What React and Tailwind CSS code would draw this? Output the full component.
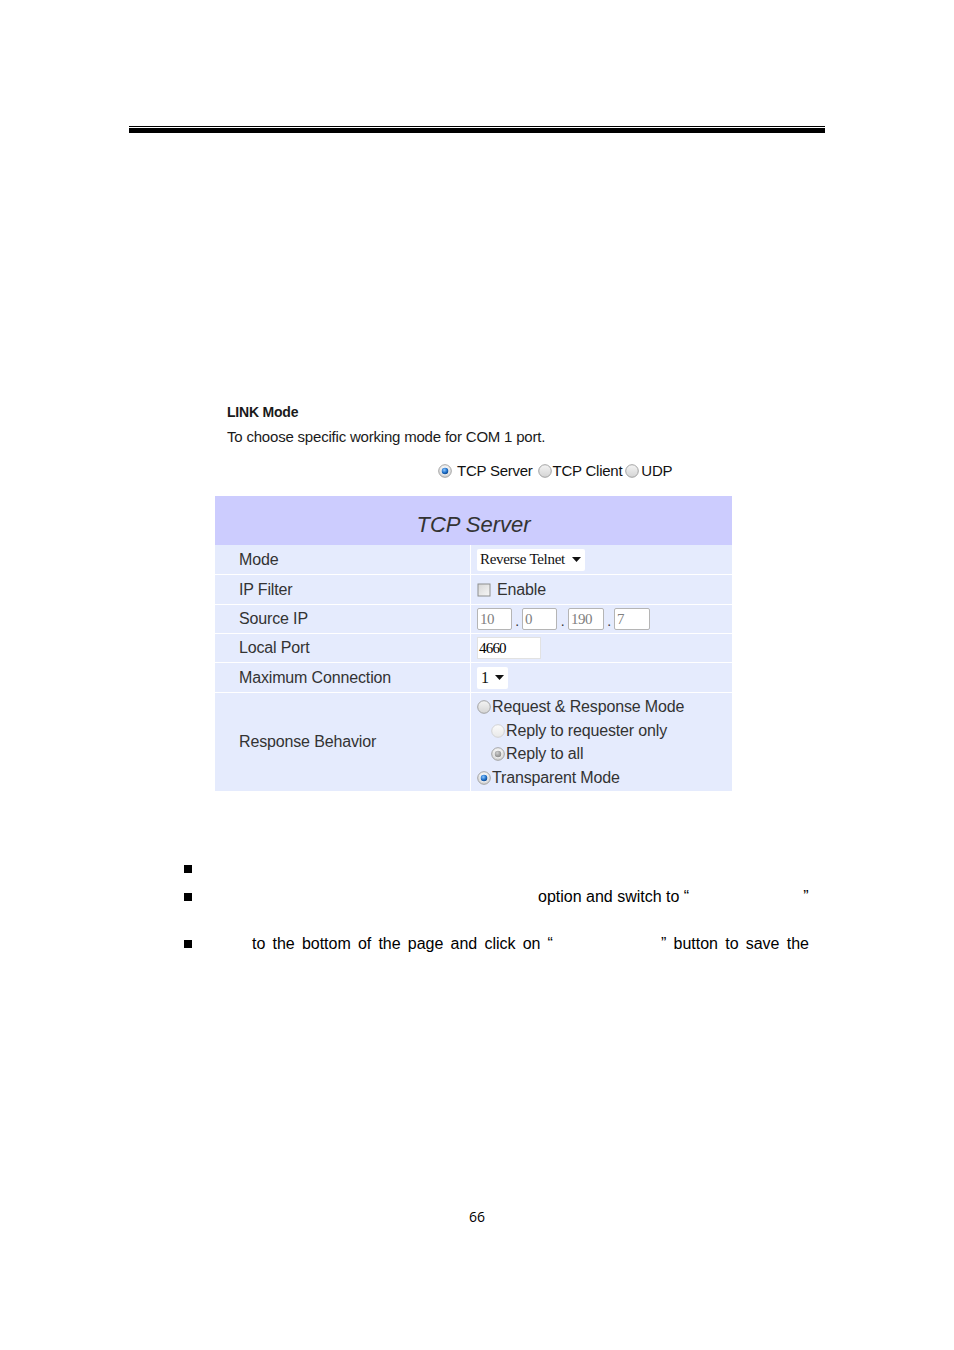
import React from "react";

const Radio = ({ checked = false, disabled = false, dim = false }) => {
  const id = checked ? (disabled ? "rg-cd" : "rg-c") : dim ? "rg-d" : "rg-u";
  return (
    <svg width="14" height="14" viewBox="0 0 14 14" className="shrink-0 block">
      <defs>
        <linearGradient id={id + "-bg"} x1="0" y1="0" x2="0" y2="1">
          <stop offset="0" stopColor={dim ? "#fbfbfb" : "#f4f4f4"} />
          <stop offset="1" stopColor={dim ? "#e8e8e8" : "#d4d4d4"} />
        </linearGradient>
        <radialGradient id={id + "-dot"} cx="0.4" cy="0.35" r="0.7">
          <stop offset="0" stopColor={disabled ? "#d0d0d0" : "#8ec8ff"} />
          <stop offset="0.6" stopColor={disabled ? "#a0a0a0" : "#1f6fc8"} />
          <stop offset="1" stopColor={disabled ? "#8a8a8a" : "#0a3f80"} />
        </radialGradient>
      </defs>
      <circle cx="7" cy="7" r="6.3" fill={`url(#${id}-bg)`} stroke={dim ? "#cfcfcf" : "#9a9a9a"} strokeWidth="0.9" />
      {checked && (
        <>
          <circle cx="7" cy="7" r="4.2" fill="#ffffff" opacity="0.6" />
          <circle cx="7" cy="7" r="3.3" fill={`url(#${id}-dot)`} />
        </>
      )}
    </svg>
  );
};

const Caret = () => (
  <svg width="9" height="5" viewBox="0 0 9 5" className="block shrink-0">
    <path d="M0 0 L9 0 L4.5 5 Z" fill="#111" />
  </svg>
);

const Checkbox = () => (
  <svg width="14" height="14" viewBox="0 0 14 14" className="block shrink-0">
    <defs>
      <linearGradient id="cb-bg" x1="0" y1="0" x2="1" y2="1">
        <stop offset="0" stopColor="#d8d8d8" />
        <stop offset="1" stopColor="#f6f6f6" />
      </linearGradient>
    </defs>
    <rect x="0.5" y="0.5" width="13" height="13" fill="#8e8f8f" />
    <rect x="1.5" y="1.5" width="11" height="11" fill="url(#cb-bg)" />
  </svg>
);

const Label = ({ children }) => (
  <div className="bg-[#e5ebfd] flex items-center pl-[24px] text-[16px] tracking-[-0.15px] text-[#333333]">{children}</div>
);

const Cell = ({ children }) => (
  <div className="bg-[#e5ebfd] flex items-center pl-[6px] text-[16px] tracking-[-0.15px] text-[#333333]">{children}</div>
);

const IpBox = ({ v, w = "w-[35px]" }) => (
  <div className={`${w} h-[22px] bg-white border border-[#b5b5b5] rounded-[2px] flex items-center pl-[2px] font-['Liberation_Serif',serif] text-[15px] text-[#808080] tracking-[-0.5px]`}>
    {v}
  </div>
);

const Dot = () => <span className="w-[10px] text-center text-[14px] leading-[14px] text-[#333] self-end mb-[2px]">.</span>;

export default function App() {
  return (
    <div className="w-[954px] h-[1350px] bg-white text-black font-['Liberation_Sans',Arial,sans-serif]">
      <div className="pt-[126px] px-[129px]">
        <div className="h-px bg-black" />
        <div className="mt-px h-[5px] bg-black" />
      </div>

      <div className="ml-[215px] w-[517px] mt-[271px]">
        <div className="pl-[12px] leading-[16px] text-[#1a1a1a]">
          <div className="font-bold text-[14px] tracking-[-0.2px]">LINK Mode</div>
          <div className="mt-[9px] text-[15px] tracking-[-0.2px]">To choose specific working mode for COM 1 port.</div>
        </div>

        <div className="mt-[17px] h-[18px] flex items-center pl-[223px] text-[15px] tracking-[-0.25px] text-[#111]">
          <Radio checked />
          <span className="ml-[5px]">TCP Server</span>
          <span className="ml-[5px]"><Radio /></span>
          <span className="ml-[1px]">TCP Client</span>
          <span className="ml-[3px]"><Radio /></span>
          <span className="ml-[2px]">UDP</span>
        </div>

        <div className="mt-[16px]">
          <div className="h-[49px] bg-[#ccccfe] flex justify-center pt-[16px]">
            <span className="italic text-[22px] leading-[26px] text-[#333333]">TCP Server</span>
          </div>
          <div className="grid grid-cols-[255px_261px] gap-x-px gap-y-px grid-rows-[29px_29px_28px_28px_29px_98px] bg-white">
            <Label>Mode</Label>
            <Cell>
              <div className="w-[108px] h-[22px] bg-white rounded-[2px] flex items-center pl-[3px] pr-[4px] justify-between font-['Liberation_Serif',serif] text-[15px] text-[#111] tracking-[-0.3px]">
                <span>Reverse Telnet</span>
                <Caret />
              </div>
            </Cell>

            <Label>IP Filter</Label>
            <Cell>
              <Checkbox />
              <span className="ml-[6px]">Enable</span>
            </Cell>

            <Label>Source IP</Label>
            <Cell>
              <div className="flex items-stretch">
                <IpBox v="10" />
                <Dot />
                <IpBox v="0" />
                <span className="w-[11px] text-center text-[14px] leading-[14px] text-[#333] self-end mb-[2px]">.</span>
                <IpBox v="190" w="w-[36px]" />
                <Dot />
                <IpBox v="7" w="w-[36px]" />
              </div>
            </Cell>

            <Label>Local Port</Label>
            <Cell>
              <div className="w-[64px] h-[22px] bg-white border border-[#e2e2e2] flex items-center pl-px font-['Liberation_Serif',serif] text-[15px] text-[#000] tracking-[-0.8px]">
                4660
              </div>
            </Cell>

            <Label>Maximum Connection</Label>
            <Cell>
              <div className="w-[31px] h-[22px] bg-white rounded-[2px] flex items-center pl-[4px] pr-[4px] justify-between font-['Liberation_Serif',serif] text-[16px] text-[#111]">
                <span>1</span>
                <Caret />
              </div>
            </Cell>

            <Label>Response Behavior</Label>
            <div className="bg-[#e5ebfd] pt-[2px] pl-[6px] text-[16px] tracking-[-0.15px] text-[#333333]">
              <div className="h-[24px] flex items-center">
                <Radio />
                <span className="ml-[1px]">Request &amp; Response Mode</span>
              </div>
              <div className="h-[23px] flex items-center pl-[14px]">
                <Radio dim />
                <span className="ml-[1px]">Reply to requester only</span>
              </div>
              <div className="h-[24px] flex items-center pl-[14px]">
                <Radio checked disabled />
                <span className="ml-[1px]">Reply to all</span>
              </div>
              <div className="h-[23px] flex items-center">
                <Radio checked />
                <span className="ml-[1px]">Transparent Mode</span>
              </div>
            </div>
          </div>
        </div>
      </div>

      <div className="mt-[70px] relative text-[16px] text-black">
        <div className="h-[16px] flex items-center pl-[184px]">
          <div className="w-[8px] h-[8px] bg-black" />
        </div>
        <div className="mt-[12px] h-[16px] flex items-center">
          <div className="ml-[184px] w-[8px] h-[8px] bg-black" />
          <span className="ml-[346px]">option and switch to “</span>
          <span className="ml-[114px]">”</span>
        </div>
        <div className="mt-[31px] h-[16px] flex items-center">
          <div className="ml-[184px] w-[8px] h-[8px] bg-black" />
          <div className="ml-[60px] w-[301px] flex justify-between">
            <span>to</span><span>the</span><span>bottom</span><span>of</span><span>the</span><span>page</span><span>and</span><span>click</span><span>on</span><span>“</span>
          </div>
          <div className="ml-[108px] w-[148px] flex justify-between">
            <span>”</span><span>button</span><span>to</span><span>save</span><span>the</span>
          </div>
        </div>
      </div>

      <div className="mt-[257px] text-center text-[14px] leading-[16px] font-['Open_Sans',sans-serif] text-black">66</div>
    </div>
  );
}
